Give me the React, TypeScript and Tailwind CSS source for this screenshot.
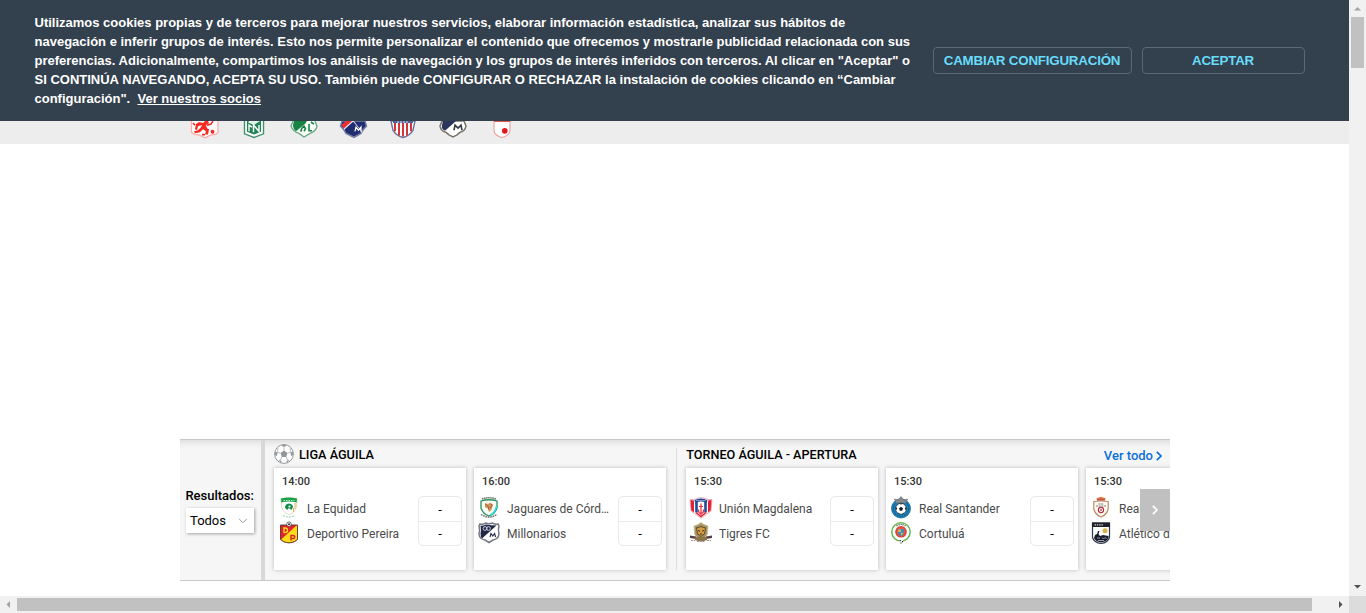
import React from "react";

type CrestName =
  | "equidad" | "pereira" | "jaguares" | "millonarios" | "magdalena"
  | "tigres" | "santander" | "cortulua" | "cartagena" | "cali";

const crests: Record<CrestName, React.ReactNode> = {
  equidad: (
    <>
      <path d="M4 1.500Q12 0 20 1.500L19.500 10Q18 15.500 12 17.500Q6 15.500 4.500 10Z" fill="#fff" stroke="#d8d0a8" strokeWidth=".8" />
      <path d="M4 1.500Q12-.5 20 1.500L19.700 5.500Q12 3.500 4.300 5.500Z" fill="#16a34a" />
      <path d="M6.500 3.500h11" stroke="#c9efd2" strokeDasharray="1.500 1" />
      <path d="M8 10.500Q8 7 12 6.500Q16 7 16 10L14.500 13L12 11L10 13Z" fill="#128c46" />
      <circle cx="12.500" cy="9.500" r="1.100" fill="#fff" />
      <path d="M18 6v6M16.500 11v4" stroke="#d6b35c" />
      <path d="M6 18.500Q12 21.500 18 18.500" fill="none" stroke="#a9dcba" strokeWidth="1.300" strokeDasharray="2 1" />
    </>
  ),
  pereira: (
    <>
      <path d="M3.500 3H20.500V17.500Q18 20.500 12 21Q6 20.500 3.500 17.500Z" fill="#e3202b" />
      <path d="M20 3V17.500Q17 20.500 12 20.700Q7 20.500 4 17.500Z" fill="#fbdc16" />
      <path d="M3.500 3H20.500V17.500Q18 20.500 12 21Q6 20.500 3.500 17.500Z" fill="none" stroke="#54352b" strokeWidth=".9" />
      <path d="M7 6v4.500h1.200Q10.500 10.500 10.500 8.300Q10.500 6 8.200 6Z" fill="none" stroke="#f9db22" strokeWidth="1.400" />
      <path d="M14 18.500v-5h1.800Q17.800 13.500 17.800 15Q17.800 16.500 16 16.500h-2" fill="none" stroke="#d72831" strokeWidth="1.400" />
      <circle cx="12" cy="2.200" r="2.300" fill="#fff" stroke="#444" strokeWidth=".8" />
      <path d="M11 1.500h2v1.500h-2z" fill="#333" />
    </>
  ),
  jaguares: (
    <>
      <path d="M5 2Q12-.5 19 2" fill="none" stroke="#647269" strokeWidth="1.600" strokeDasharray="1.500 .6" />
      <path d="M4 4Q12 1.500 20 4V11Q18 17 12 19Q6 17 4 11Z" fill="#fbfbf5" stroke="#23915a" strokeWidth="1.300" />
      <path d="M19.500 9Q18.500 15.500 13 18" fill="none" stroke="#31dce5" strokeWidth="1.600" />
      <path d="M8 6L11 7L13 5.500L16 7.500L14.500 13L12 15L10.500 11L8 10.500Z" fill="#c99b58" />
      <path d="M8.500 7l2.500 2.500 1 3M14 7l1 1.500-2 2.500" fill="none" stroke="#b64a42" strokeWidth="1" />
      <path d="M4 17.500Q12 22.500 20 17.500" fill="none" stroke="#697272" strokeWidth="1.400" strokeDasharray="1.700 .7" />
    </>
  ),
  millonarios: (
    <>
      <path d="M3 2Q6 3 8.500 1Q12 2.500 15.500 1Q18 3 21 2L22 4Q20.800 7 22 12Q21.500 17 16 18L12 20.500L8 18Q2.500 17 2 12Q3.200 7 2 4Z" fill="#fff" stroke="#747782" strokeWidth="1.500" />
      <path d="M3.500 3.500Q7 4 9 2.500Q14 3.500 19.500 3.500L5 16.500Q2.800 14 4 8Z" fill="#202747" />
      <circle cx="8" cy="6.500" r="1.900" fill="none" stroke="#d8dce5" strokeWidth=".9" />
      <circle cx="11.500" cy="6.500" r="1.900" fill="none" stroke="#d8dce5" strokeWidth=".9" />
      <path d="M13 15l1-3.500 1.800 2.500 1.800-2.500 1 3.500" fill="none" stroke="#222b4a" strokeWidth="1.100" />
    </>
  ),
  magdalena: (
    <>
      <path d="M1 2.500Q5 3 8 1.500Q12-.5 16 1.500Q20 3 23 2.500L22 14Q18 17 12 21Q6 17 2 14Z" fill="#fff" stroke="#d8798b" strokeWidth=".6" />
      <path d="M1.500 3L5 3.500V15.500L2.300 13.500ZM19 3.500L22.500 3L21.700 13.500L19 15.500Z" fill="#e32235" />
      <path d="M7.500 4V15.500M16.500 4V15.500" stroke="#254a96" strokeWidth="2.600" />
      <path d="M6 4.500Q12 1.500 18 4.500" fill="none" stroke="#254a96" strokeWidth="2.800" />
      <path d="M7 15.500L12 19.500L17 15.500" fill="none" stroke="#e32235" strokeWidth="1.500" />
      <path d="M12 6.500V18M10 9.500H14M9.500 12.500Q9.500 16.500 12 16.500Q14.500 16.500 14.500 12.500" fill="none" stroke="#df2d3d" strokeWidth="1.200" />
      <path d="M7.500 3.500h9" stroke="#cad8f3" strokeDasharray="1 1" />
    </>
  ),
  tigres: (
    <>
      <path d="M5 4L9 2.500L12 .5L15 2.500L19 4L18.500 12Q16 18 12 18Q8 18 5.500 12Z" fill="#a89566" stroke="#d0c59f" strokeWidth=".8" />
      <path d="M7 5.500L9.500 5L12 4L14.500 5L17 5.500L16 12L12 15L8 12Z" fill="#5b472f" />
      <path d="M8 6.500L12 5L16 6.500L15 11.500L12 14L9 11.500Z" fill="#d79e45" />
      <path d="M9 8.500l2 .7M15 8.500l-2 .7M11 12h2" stroke="#3c2c1b" strokeWidth="1" />
      <path d="M1 13.500l6 1v2.500l-6-1ZM23 13.500l-6 1v2.500l6-1Z" fill="#57404b" />
      <path d="M6 15.500Q12 13.500 18 15.500V18Q12 20.500 6 18Z" fill="#8b7546" />
      <path d="M2 18.500h4M18 18.500h4M8 19.500h8" stroke="#a590a1" strokeDasharray="2 .7" />
    </>
  ),
  santander: (
    <>
      <circle cx="12" cy="11.500" r="9.500" fill="#1982bd" stroke="#166691" strokeWidth=".8" />
      <circle cx="12" cy="11.500" r="7.700" fill="none" stroke="#104d73" strokeDasharray="1.500 1" />
      <path d="M5.500 2L9 3L12-.5L15 3L18.500 2L17 6H7Z" fill="#85898d" stroke="#666b70" strokeWidth=".6" />
      <circle cx="12" cy="11.800" r="5.500" fill="#fff" stroke="#1a2d37" strokeWidth=".8" />
      <path d="M12 9.700l2 1.500-.8 2.500h-2.400l-.8-2.500zM11 6.500h2l-1 1.500zM6.700 10l1.500 1-.8 2.500zM17.300 10l-1.500 1 .8 2.500zM9 15.500l1.800 1-1 .6zM15 15.500l-1.800 1 1 .6z" fill="#171f25" />
    </>
  ),
  cortulua: (
    <>
      <circle cx="12" cy="10" r="9.200" fill="#fff" stroke="#64b953" strokeWidth="1.500" />
      <path d="M7.500 4Q12 1 16.500 4" fill="none" stroke="#555" strokeWidth="1.100" strokeDasharray="1.300 .8" />
      <circle cx="12" cy="9.800" r="5.200" fill="#ee5543" stroke="#db3c32" strokeWidth="1.200" />
      <path d="M8.800 7h6.400v3.700q-.8 2.700-3.200 3.800-2.400-1.100-3.200-3.800Z" fill="#428db6" />
      <path d="M9.300 7.500h2.500V10H9.300zM12 10.500l2.300.7L12 13.500z" fill="#efbc54" />
      <circle cx="12" cy="19.300" r="2.200" fill="#fff" />
      <path d="M10.500 18h1.300v1.300h-1.300zM13 19h1v1.200h-1zM11.500 20.500h1v1h-1z" fill="#111" />
    </>
  ),
  cartagena: (
    <>
      <path d="M8 3Q6.500 1 9 .8L12-.3L15 .8Q17.500 1 16 3Z" fill="#dc7549" />
      <path d="M8 3h8" stroke="#b74835" strokeWidth="1.300" />
      <path d="M4.800 4.500Q12 3.500 19.200 4.500V12Q18 17.500 12 20Q6 17.500 4.800 12Z" fill="#fffaf0" stroke="#b98d68" strokeWidth="1.200" />
      <path d="M9.500 7h5M7 9h10" stroke="#697077" strokeWidth=".9" strokeDasharray="2 .7" />
      <circle cx="12" cy="13" r="2.600" fill="#fff" stroke="#b8283b" strokeWidth="1.100" />
      <path d="M11.200 12.200h1.600v1.600h-1.600z" fill="#b8283b" />
    </>
  ),
  cali: (
    <>
      <path d="M3.500 1H20.500V15.500Q19 20.500 12 21.500Q5 20.500 3.500 15.500Z" fill="#fff" stroke="#303748" strokeWidth="1.200" />
      <path d="M3 .5H21V5H3Z" fill="#1c202c" />
      <path d="M5.500 2.800h9" stroke="#d3cbb3" strokeWidth="1.200" strokeDasharray="1.500 .8" />
      <circle cx="16" cy="8.800" r="2.500" fill="#d9b34e" />
      <path d="M5 16L6 13L8 12L9 9L10.500 9L9.500 12L11 14L14 13L19.500 14V16Q18 19.500 12 20.500Q6.500 19.500 5 16Z" fill="#171c2c" />
      <path d="M8 16h3M13 15.500l1.500 1.500 1.500-1.500 1.500 1M9 18.500h6" fill="none" stroke="#bec0c6" strokeWidth=".8" />
    </>
  ),
};

function Crest({ name }: { name: CrestName }) {
  return <svg viewBox="0 0 24 22" className="h-[22px] w-6 shrink-0 -translate-y-px overflow-visible">{crests[name]}</svg>;
}

const clubs: React.ReactNode[] = [
  <>
    <path d="M1.500 0V11Q4 13.500 9 13.500L15 16.300L21 13.500Q26 13.500 28 11V0" fill="#fff" stroke="#ffaaa5" strokeWidth="1.200" />
    <path d="M9 1L13 2L15 0H18L19 2L16 4L17 7L19 8L18 13H15L16 10L13 8L10 11L5 12L4 10L8 9L11 6L12 4L8 5L7 9L5 8L6 3Z" fill="#f52b22" />
    <path d="M17 4L21 3L23 0M5 4L3 2M12 13.300h3" fill="none" stroke="#f52b22" strokeWidth="1.600" />
    <circle cx="22.500" cy="10.500" r="1.900" fill="#ed2a22" />
  </>,
  <>
    <path d="M4.500 0V12.500L14 16L23.500 12.500V0" fill="#fff" stroke="#45916c" strokeWidth="1.400" />
    <path d="M7 0H21V10.500L14 13L7 10.500Z" fill="#218457" />
    <path d="M8 1.500L14 4L20 0H12L9 0Z" fill="#e5f4eb" />
    <path d="M9 10V4L12 6M13.500 11V4L19 10V4" fill="none" stroke="#fff" strokeWidth="1.400" />
  </>,
  <>
    <path d="M4 0L2 5Q4 10 10 12L15 15.500L21 12Q27 10 28 5L26 0" fill="#f9fff9" stroke="#69a582" strokeWidth="1.300" />
    <path d="M4 4L5 0H18L16 3L7 10Q4 8 4 4Z" fill="#178445" />
    <path d="M12 10.500Q12 7 15 5L16.500 7.500L15 10M20 3V9.500H23M22 1L25 3" fill="none" stroke="#198244" strokeWidth="1.600" />
  </>,
  <>
    <path d="M3 0L1.500 5Q5 8 7 12L15 15.800L22 12Q24 8 27.500 5L26 0Z" fill="#202d70" stroke="#777ea5" strokeWidth="1.500" />
    <path d="M2.500 4L7 0H13L5 8Z" fill="#ee3030" />
    <path d="M5 8L14 0L23 11" fill="none" stroke="#e8e9f2" strokeWidth="1.200" />
    <path d="M14.500 1L22 10L8 11L6 8Z" fill="#202d70" />
    <path d="M16 10L17 6L19.500 9L22 6V10" fill="none" stroke="#fff" strokeWidth="1.300" />
  </>,
  <>
    <path d="M3 0L5 9Q8 14 15 16Q22 14 25 9L27 0Z" fill="#fff" stroke="#65719b" strokeWidth="1.400" />
    <path d="M7 2V10M11 2V14M15 2V15M19 2V14M23 2V10" stroke="#d4353d" strokeWidth="2" />
    <path d="M5 0h20v2H5z" fill="#4d6295" /><path d="M9 1h12" stroke="#d8dff0" strokeDasharray="2 1" />
  </>,
  <>
    <path d="M4 0L2 5Q3 10 8 11L11 13.500L15 15.500L19 13.500L22 11Q27 10 28 5L26 0Z" fill="#fff" stroke="#777465" strokeWidth="1.500" />
    <path d="M5 0H18L7 9.500Q3 8 4 4Z" fill="#29355a" />
    <path d="M16 9L17 4L20 7L23 4L24 9" fill="none" stroke="#353b42" strokeWidth="1.600" />
  </>,
  <>
    <path d="M7 0V9Q7 13 12 15L15 16L18 15Q23 13 23 9V0Z" fill="#fff" stroke="#ee9997" />
    <path d="M7 .5h16" stroke="#ed5753" /><circle cx="17.800" cy="9.500" r="2.800" fill="#e3151d" />
  </>,
];

interface Match {
  time: string;
  teams: { name: string; crest: CrestName }[];
}

const liga: Match[] = [
  { time: "14:00", teams: [{ name: "La Equidad", crest: "equidad" }, { name: "Deportivo Pereira", crest: "pereira" }] },
  { time: "16:00", teams: [{ name: "Jaguares de Córdoba", crest: "jaguares" }, { name: "Millonarios", crest: "millonarios" }] },
];
const torneo: Match[] = [
  { time: "15:30", teams: [{ name: "Unión Magdalena", crest: "magdalena" }, { name: "Tigres FC", crest: "tigres" }] },
  { time: "15:30", teams: [{ name: "Real Santander", crest: "santander" }, { name: "Cortuluá", crest: "cortulua" }] },
  { time: "15:30", teams: [{ name: "Real Cartagena", crest: "cartagena" }, { name: "Atlético de Cali", crest: "cali" }] },
];

function MatchCard({ match }: { match: Match }) {
  return (
    <article className="flex h-[102px] w-48 shrink-0 flex-col bg-white pl-[3px] pr-1 shadow-[0_0_4px_rgba(0,0,0,0.25)]">
      <div className="h-7 pl-[5px] pt-1.5 text-[11px] leading-4 font-medium text-[#333]">{match.time}</div>
      <div className="flex h-[50px] justify-between">
        <div>
          {match.teams.map((team) => (
            <div key={team.name} className="flex h-[25px] items-center">
              <Crest name={team.crest} />
              <span className="ml-1.5 w-[103px] truncate text-[12px] leading-5 text-[#4a4a4a]">{team.name}</span>
            </div>
          ))}
        </div>
        <div className="flex w-11 flex-col rounded-[5px] border border-[#e9e9e9] text-center text-[13px] text-black">
          <div className="h-[25px] border-b border-[#e9e9e9] leading-[26px]">-</div>
          <div className="leading-6">-</div>
        </div>
      </div>
    </article>
  );
}

function Football() {
  return (
    <svg viewBox="0 0 20 20" className="mr-[5px] size-5 -translate-y-px">
      <circle cx="10" cy="10" r="9.400" fill="#fff" stroke="#92979b" />
      <path d="M10 6.500L13.500 9L12.200 13h-4.400L6.500 9Z M7 1.500L10 3L13 1.500L10 .5ZM1 7.500L3.500 8.500L3 12L1 11ZM19 7.500L16.500 8.500L17 12L19 11ZM4.500 16L7.500 17L7 19ZM15.500 16L12.500 17L13 19Z" fill="#92979b" />
      <path d="M10 3v3.500M3.500 8.500l3 .5M16.500 8.500l-3 .5M7.800 13L6 17M12.200 13L14 17M3.500 8.500L4 4M16.500 8.500L16 4" stroke="#a6aaad" strokeWidth=".8" />
    </svg>
  );
}

function CookieBanner() {
  return (
    <header className="flex h-[121px] bg-[#33404d] font-['Liberation_Sans',Arial,sans-serif] font-bold text-white">
      <p className="w-[933px] shrink-0 whitespace-nowrap pl-[34.5px] pt-[13px] text-[13px] leading-[19px]">
        Utilizamos cookies propias y de terceros para mejorar nuestros servicios, elaborar información estadística, analizar sus hábitos de<br />
        navegación e inferir grupos de interés. Esto nos permite personalizar el contenido que ofrecemos y mostrarle publicidad relacionada con sus<br />
        preferencias. Adicionalmente, compartimos los análisis de navegación y los grupos de interés inferidos con terceros. Al clicar en "Aceptar" o<br />
        SI CONTINÚA NAVEGANDO, ACEPTA SU USO. También puede CONFIGURAR O RECHAZAR la instalación de cookies clicando en “Cambiar<br />
        configuración".&nbsp; <a className="underline">Ver nuestros socios</a>
      </p>
      <div className="flex gap-2.5 pt-[47px] text-[13.333px] tracking-[-0.2px] text-[#68dcfa]">
        <button className="h-[27px] w-[199px] whitespace-nowrap rounded-[4px] border border-[#5c6874] pr-px leading-[25px]">CAMBIAR CONFIGURACIÓN</button>
        <button className="h-[27px] w-[163px] rounded-[4px] border border-[#5c6874] pr-px leading-[25px]">ACEPTAR</button>
      </div>
    </header>
  );
}

function Results() {
  return (
    <section className="ml-[180px] mt-[295px] flex h-[142px] w-[990px] overflow-hidden border-y border-[#c9c9c9] bg-[#f6f6f6] font-[Roboto,sans-serif] shadow-[inset_0_7px_7px_-5px_rgba(0,0,0,0.12)]">
      <aside className="flex w-[85px] shrink-0 flex-col border-r-4 border-[#d8d8d8] pl-[5px] pt-12">
        <span className="whitespace-nowrap pl-[0.4px] text-[13px] leading-4 font-medium text-black">Resultados:</span>
        <button className="mt-1 ml-px flex h-[25px] w-[68px] items-center justify-between bg-white pl-1 pr-1.5 text-[13px] text-black shadow-[1px_1px_3px_rgba(0,0,0,0.35)]">
          Todos
          <svg viewBox="0 0 10 6" className="h-1.5 w-2.5" fill="none" stroke="#888" strokeWidth=".8"><path d="M1 .8L5 4.800L9 .8" /></svg>
        </button>
      </aside>
      <div className="relative flex w-[905px] shrink-0 overflow-hidden pl-[9px]">
        <div className="w-[402px] shrink-0">
          <h2 className="flex h-7 items-center pt-px text-[12.7px] font-medium text-black"><Football />LIGA ÁGUILA</h2>
          <div className="flex gap-2">{liga.map((m) => <MatchCard key={m.teams[0].name} match={m} />)}</div>
        </div>
        <div className="mt-2 mr-[9px] h-[122px] w-px shrink-0 bg-[#dedede]" />
        <div className="shrink-0">
          <h2 className="flex h-7 items-center pt-[2px] pl-[0.3px] text-[12.65px] font-medium text-black">TORNEO ÁGUILA - APERTURA</h2>
          <div className="flex gap-2">{torneo.map((m) => <MatchCard key={m.teams[0].name} match={m} />)}</div>
        </div>
        <a className="absolute right-2 top-[7px] flex items-center gap-[3px] text-[13px] leading-[18px] font-medium text-[#0b70d8]">
          Ver todo
          <svg viewBox="0 0 6 10" className="h-2.5 w-1.5" fill="none" stroke="currentColor" strokeWidth="1.700"><path d="M.8 .8L5 5L.8 9.200" /></svg>
        </a>
        <button className="absolute right-0 top-[49px] flex h-[42px] w-[30px] items-center justify-center bg-[#c0c0c0]">
          <svg viewBox="0 0 6 10" className="h-2.5 w-1.5" fill="none" stroke="#fff" strokeWidth="1.700"><path d="M.8 .8L5 5L.8 9.200" /></svg>
        </button>
      </div>
    </section>
  );
}

export default function App() {
  return (
    <div className="grid h-[613px] w-[1366px] grid-cols-[1349px_17px] grid-rows-[596px_17px] overflow-hidden bg-white">
      <main className="min-w-0 overflow-hidden">
        <CookieBanner />
        <nav className="flex h-[23px] gap-[19.500px] overflow-hidden bg-[#ededed] pl-[190px]">
          {clubs.map((club, i) => <svg key={i} viewBox="0 0 30 17" preserveAspectRatio="none" className="h-[17.5px] w-[30px] shrink-0">{club}</svg>)}
        </nav>
        <Results />
      </main>
      <div className="flex flex-col items-center justify-between bg-[#f1f1f1]">
        <div className="flex flex-col items-center">
          <svg viewBox="0 0 17 17" className="size-[17px]"><path d="M5 10.500L8.500 7L12 10.500Z" fill="#a3a3a3" /></svg>
          <div className="h-[51px] w-[13px] bg-[#c1c1c1]" />
        </div>
        <svg viewBox="0 0 17 17" className="size-[17px]"><path d="M5 6L8.500 9.500L12 6Z" fill="#505050" /></svg>
      </div>
      <div className="flex items-center justify-between bg-[#f1f1f1]">
        <svg viewBox="0 0 17 17" className="size-[17px]"><path d="M10 5L6.500 8.500L10 12Z" fill="#a3a3a3" /></svg>
        <div className="mr-auto h-[13px] w-[1295px] bg-[#c1c1c1]" />
        <svg viewBox="0 0 17 17" className="size-[17px]"><path d="M7 5L10.500 8.500L7 12Z" fill="#505050" /></svg>
      </div>
      <div className="bg-[#dcdcdc]" />
    </div>
  );
}
